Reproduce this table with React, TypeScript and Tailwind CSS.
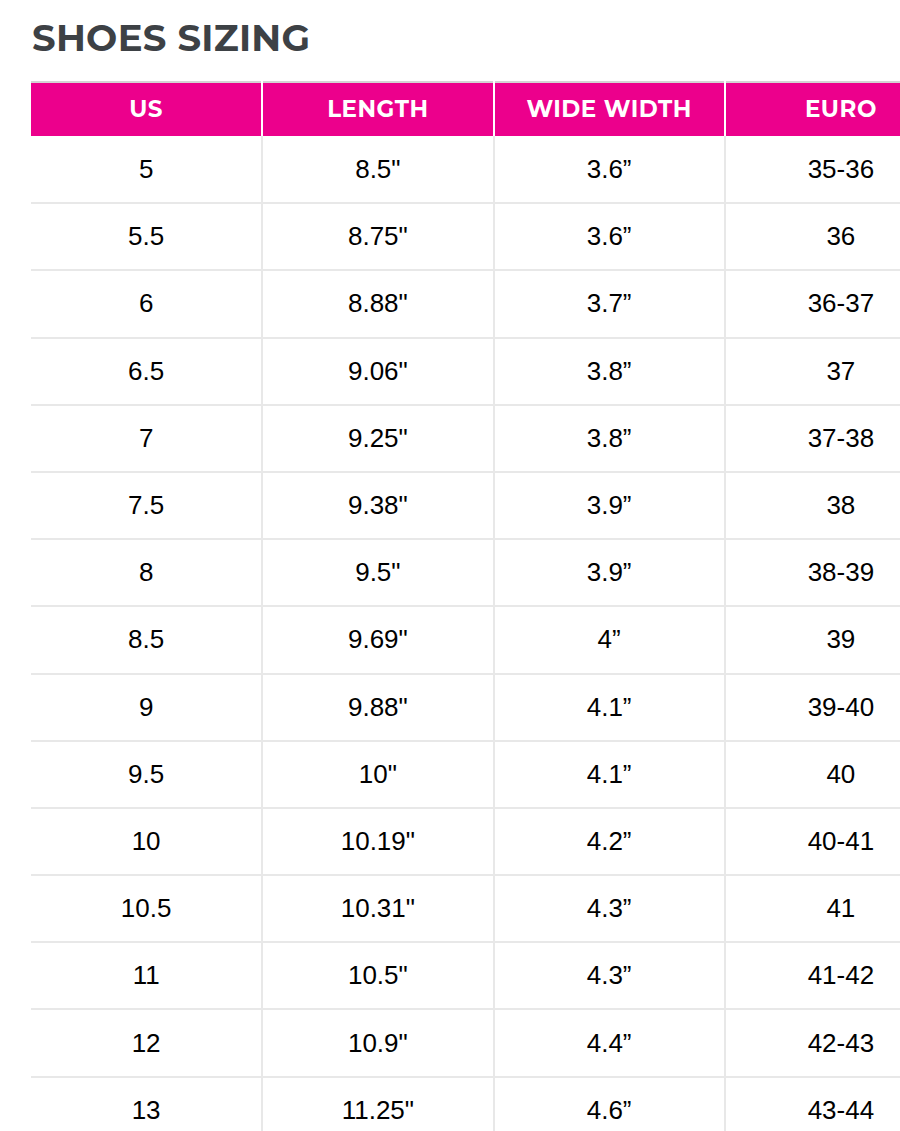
const rows: [string, string, string, string][] = [
  ["5", '8.5"', "3.6”", "35-36"],
  ["5.5", '8.75"', "3.6”", "36"],
  ["6", '8.88"', "3.7”", "36-37"],
  ["6.5", '9.06"', "3.8”", "37"],
  ["7", '9.25"', "3.8”", "37-38"],
  ["7.5", '9.38"', "3.9”", "38"],
  ["8", '9.5"', "3.9”", "38-39"],
  ["8.5", '9.69"', "4”", "39"],
  ["9", '9.88"', "4.1”", "39-40"],
  ["9.5", '10"', "4.1”", "40"],
  ["10", '10.19"', "4.2”", "40-41"],
  ["10.5", '10.31"', "4.3”", "41"],
  ["11", '10.5"', "4.3”", "41-42"],
  ["12", '10.9"', "4.4”", "42-43"],
  ["13", '11.25"', "4.6”", "43-44"],
];

const headers = ["US", "LENGTH", "WIDE WIDTH", "EURO"];

export default function App() {
  return (
    <div className="h-[1131px] w-[900px] overflow-hidden bg-white">
      <div className="pl-[31px] pt-[14px]">
        <h1 className="pl-[1px] font-['Montserrat','Lato',sans-serif] text-[37px] font-bold leading-[48px] tracking-[0.3px] text-[#3d4145]">
          SHOES SIZING
        </h1>
        <table className="mt-[19px] w-[925px] table-fixed border-collapse">
          <thead>
            <tr className="border-t-2 border-[#d4d4d4] bg-[#ec008c]">
              {headers.map((h, i) => (
                <th
                  key={h}
                  className={`h-[54px] p-0 text-center font-['Montserrat','Lato',sans-serif] text-[23px] font-bold tracking-[0.5px] text-white ${
                    i > 0 ? "border-l-2 border-white" : ""
                  }`}
                >
                  {h}
                </th>
              ))}
            </tr>
          </thead>
          <tbody>
            {rows.map((row) => (
              <tr key={row[0]} className="border-b-2 border-[#e8e8e8]">
                {row.map((cell, i) => (
                  <td
                    key={i}
                    className={`h-[67.2px] p-0 text-center font-['Liberation_Sans',Arial,sans-serif] text-[26px] text-black ${
                      i > 0 ? "border-l-2 border-[#e8e8e8]" : ""
                    }`}
                  >
                    {cell}
                  </td>
                ))}
              </tr>
            ))}
          </tbody>
        </table>
      </div>
    </div>
  );
}
